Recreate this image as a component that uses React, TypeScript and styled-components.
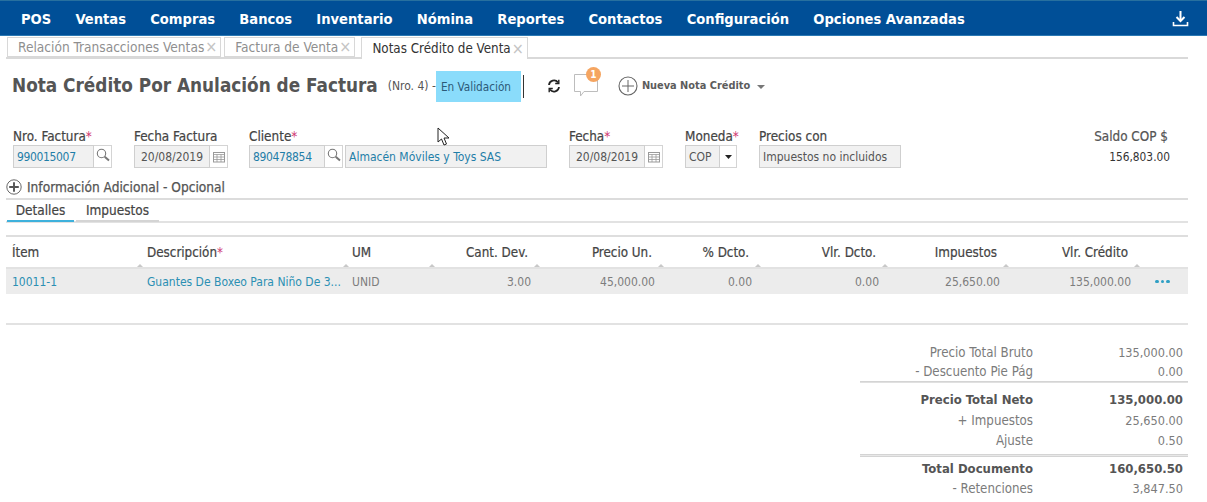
import React from "react";
import styled, { createGlobalStyle } from "styled-components";

const Global = createGlobalStyle`
  html, body { margin: 0; padding: 0; background: #fff; }
  body { width: 1207px; height: 502px; overflow: hidden; font-family: "DejaVu Sans Condensed", "DejaVu Sans", sans-serif; font-stretch: condensed; color: #555; }
  * { box-sizing: border-box; }
`;

const Page = styled.div`
  position: relative;
  width: 1207px;
  height: 502px;
  overflow: hidden;
  display: flex;
  flex-direction: column;
`;

const Nav = styled.nav`
  height: 36px;
  flex: none;
  background: #004f97;
  border-top: 1px solid #27709f;
  border-bottom: 1px solid #2b79b4;
  display: flex;
  align-items: center;
  padding: 0 17px 0 21px;
  gap: 24.2px;
`;
const NavItem = styled.span`
  color: #fff;
  font-weight: 700;
  font-size: 14.6px;
  white-space: nowrap;
`;
const NavIcon = styled.span`
  margin-left: auto;
  display: flex;
`;

const TabStrip = styled.div`
  height: 23px;
  flex: none;
  margin: 0 19px 0 6px;
  padding: 1px 0 0 1px;
  display: flex;
  gap: 3px;
  border-bottom: 2px solid #d9d9d9;
`;
const Tab = styled.div<{ $active?: boolean }>`
  height: ${(p) => (p.$active ? "22px" : "20px")};
  display: flex;
  align-items: center;
  gap: 1px;
  margin-left: ${(p) => (p.$active ? "3px" : "0")};
  padding: 0 3px 0 10px;
  font-size: ${(p) => (p.$active ? "13.3px" : "13.6px")};
  white-space: nowrap;
  color: ${(p) => (p.$active ? "#333" : "#8f8f8f")};
  background: #fff;
  border: 1px solid #d8d8d8;
  border-bottom: ${(p) => (p.$active ? "none" : "1px solid #d8d8d8")};
`;
const TabClose = styled.span`
  color: #c4c4c4;
  font-size: 16px;
  line-height: 1;
`;

const TitleRow = styled.div`
  height: 31px;
  flex: none;
  margin-top: 11px;
  padding-left: 12px;
  display: flex;
  align-items: center;
`;
const Title = styled.h1`
  margin: 0 10px 0 0;
  font-size: 18.8px;
  font-weight: 700;
  color: #555;
  white-space: nowrap;
`;
const TitleNote = styled.span`
  font-size: 12px;
  color: #555;
  white-space: nowrap;
`;
const Status = styled.span`
  width: 85px;
  height: 31px;
  margin: 2px 0 0 0;
  padding-left: 5px;
  display: flex;
  align-items: center;
  background: #8adcfb;
  color: #2c5a78;
  font-size: 11.7px;
  white-space: nowrap;
`;
const Caret = styled.span`
  width: 1px;
  height: 23px;
  margin: 2px 0 0 2px;
  background: #333;
`;
const ActionIcon = styled.span<{ $ml: number }>`
  position: relative;
  display: flex;
  margin-left: ${(p) => p.$ml}px;
`;
const Badge = styled.span`
  position: absolute;
  left: 12px;
  top: -7px;
  width: 15px;
  height: 15px;
  border-radius: 50%;
  background: #f5a561;
  color: #fff;
  font-size: 10px;
  font-weight: 700;
  display: flex;
  align-items: center;
  justify-content: center;
`;
const NewNote = styled.span`
  margin-left: 4px;
  font-size: 10.9px;
  font-weight: 700;
  color: #5c5c5c;
  white-space: nowrap;
`;
const DropArrow = styled.span`
  margin-left: 7px;
  margin-top: 2px;
  border-left: 4px solid transparent;
  border-right: 4px solid transparent;
  border-top: 4px solid #777;
`;

const FieldsRow = styled.div`
  flex: none;
  margin-top: 28px;
  padding: 0 37px 0 13px;
  display: flex;
`;
const Field = styled.div<{ $w: number; $ml?: number }>`
  width: ${(p) => p.$w}px;
  margin-left: ${(p) => p.$ml ?? 0}px;
  flex: none;
`;
const Label = styled.div`
  height: 16px;
  font-size: 13.4px;
  color: #444;
  -webkit-text-stroke: 0.2px #444;
  white-space: nowrap;
`;
const Req = styled.span`
  color: #d0386f;
  -webkit-text-stroke: 0;
`;
const InputGroup = styled.div`
  display: flex;
  height: 23px;
`;
const Input = styled.div<{ $link?: boolean; $center?: boolean; $tight?: boolean }>`
  flex: 1;
  min-width: 0;
  height: 23px;
  padding: 0 3px 0 3px;
  display: flex;
  align-items: center;
  justify-content: ${(p) => (p.$center ? "center" : "flex-start")};
  font-size: 12px;
  letter-spacing: ${(p) => (p.$tight ? "-0.35px" : "0")};
  white-space: nowrap;
  background: #f1f1f1;
  border: 1px solid #cfcfcf;
  color: ${(p) => (p.$link ? "#1f7ea8" : "#555")};
`;
const Addon = styled.div<{ $w: number }>`
  width: ${(p) => p.$w}px;
  flex: none;
  height: 23px;
  display: flex;
  align-items: center;
  justify-content: center;
  background: #fff;
  border: 1px solid #d4d4d4;
  border-left: none;
`;
const SearchAddon = styled(Addon)`
  align-items: flex-start;
  padding-top: 2px;
`;
const Balance = styled.div`
  margin-left: auto;
  text-align: right;
  color: #333;
`;
const BalanceLabel = styled.div`
  height: 16px;
  font-size: 13.4px;
  color: #555;
  margin-right: 2px;
  -webkit-text-stroke: 0.2px #555;
`;
const BalanceValue = styled.div`
  height: 23px;
  display: flex;
  align-items: center;
  justify-content: flex-end;
  font-size: 11.8px;
`;

const InfoRow = styled.div`
  flex: none;
  height: 20px;
  margin: 9px 19px 0 6px;
  display: flex;
  align-items: center;
  gap: 5px;
  font-size: 13.6px;
  -webkit-text-stroke: 0.25px #555;
  color: #555;
`;
const InnerTabs = styled.div`
  flex: none;
  height: 25px;
  margin: 1px 19px 0 6px;
  padding-left: 1px;
  display: flex;
  gap: 2px;
  border-top: 2px solid #dcdcdc;
  border-bottom: 2px solid #e2e2e2;
`;
const InnerTab = styled.div<{ $active?: boolean; $w: number }>`
  width: ${(p) => p.$w}px;
  height: 22px;
  padding-top: 2px;
  text-align: center;
  font-size: 13.5px;
  color: #444;
  -webkit-text-stroke: 0.2px #444;
  border-bottom: 2px solid ${(p) => (p.$active ? "#3eb1dc" : "#d4d4d4")};
`;

const Table = styled.div`
  flex: none;
  margin: 12px 19px 0 6px;
  border-top: 2px solid #dedede;
`;
const Cols = styled.div`
  display: grid;
  grid-template-columns: 137px 206px 86px 105px 124px 97px 127px 121px 131px 1fr;
  align-items: center;
`;
const HeadRow = styled(Cols)`
  height: 32px;
  border-bottom: 2px solid #e2e2e2;
`;
const Head = styled.div<{ $right?: boolean; $pad?: number }>`
  position: relative;
  height: 100%;
  display: flex;
  align-items: center;
  justify-content: ${(p) => (p.$right ? "flex-end" : "flex-start")};
  padding: ${(p) => (p.$right ? "0 12px 0 0" : `0 0 0 ${p.$pad ?? 0}px`)};
  font-size: 13.3px;
  color: #444;
  -webkit-text-stroke: 0.2px #444;
  white-space: nowrap;
`;
const SortMark = styled.span`
  position: absolute;
  right: 0;
  bottom: 0;
  border-left: 3px solid transparent;
  border-right: 3px solid transparent;
  border-bottom: 3px solid #c8c8c8;
`;
const DataRow = styled(Cols)`
  height: 25px;
  background: #ececec;
`;
const Cell = styled.div<{ $right?: boolean; $link?: boolean; $pad?: number }>`
  font-size: 12px;
  white-space: nowrap;
  text-align: ${(p) => (p.$right ? "right" : "left")};
  padding: ${(p) => (p.$right ? "0 9px 0 0" : `0 0 0 ${p.$pad ?? 0}px`)};
  color: ${(p) => (p.$link ? "#2b8fb3" : "#7d7d7d")};
`;
const Dots = styled.div`
  display: flex;
  gap: 2px;
  padding-left: 15px;
`;
const Dot = styled.span`
  width: 3.5px;
  height: 3.5px;
  border-radius: 50%;
  background: #2f9fc4;
`;
const TableEnd = styled.div`
  flex: none;
  margin: 29px 19px 0 6px;
  border-top: 2px solid #e2e2e2;
`;

const Totals = styled.div`
  flex: none;
  width: 328px;
  margin: 18px 0 0 860px;
  display: flex;
  flex-direction: column;
`;
const TotalRow = styled.div<{ $h: number; $strong?: boolean }>`
  height: ${(p) => p.$h}px;
  display: grid;
  grid-template-columns: 173px 1fr;
  align-items: center;
  text-align: right;
  padding-right: 5px;
  font-size: ${(p) => (p.$strong ? "13px" : "13.2px")};
  font-weight: ${(p) => (p.$strong ? 700 : 400)};
  color: ${(p) => (p.$strong ? "#555" : "#7b7b7b")};
  white-space: nowrap;
`;
const TotalValue = styled.span<{ $strong?: boolean }>`
  font-size: ${(p) => (p.$strong ? "13px" : "12.6px")};
`;
const Rule = styled.div<{ $double?: boolean; $mt: number; $mb: number }>`
  height: ${(p) => (p.$double ? "3px" : "2px")};
  margin: ${(p) => p.$mt}px 0 ${(p) => p.$mb}px;
  border-top: 1px solid #d4d4d4;
  border-bottom: ${(p) => (p.$double ? "1px solid #d4d4d4" : "none")};
  background: ${(p) => (p.$double ? "#e8e8e8" : "#e0e0e0")};
`;

const Cursor = styled.svg`
  position: absolute;
  left: 437px;
  top: 127px;
`;

const Search = () => (
  <svg width="14" height="14" viewBox="0 0 14 14" fill="none" stroke="#777" strokeWidth="1.1">
    <circle cx="5.5" cy="5.5" r="4.2" />
    <path d="M8.7 8.7 L13 12.5" strokeWidth="2" />
  </svg>
);
const Calendar = () => (
  <svg width="12" height="12" viewBox="0 0 12 12" fill="none" stroke="#9a9a9a" strokeWidth="1">
    <rect x="0.5" y="1.5" width="11" height="9.5" />
    <path d="M0.5 3.5 H11.5 M0.5 6 H11.5 M0.5 8.5 H11.5 M4 3.5 V11 M8 3.5 V11" strokeWidth="0.8" />
  </svg>
);
const PlusCircle = ({ size, color, sw }: { size: number; color: string; sw: number }) => (
  <svg width={size} height={size} viewBox="0 0 20 20" fill="none" stroke={color} strokeWidth={sw}>
    <circle cx="10" cy="10" r="9" strokeWidth={1.1} />
    <path d="M10 4 V16 M4 10 H16" />
  </svg>
);

const navItems = ["POS", "Ventas", "Compras", "Bancos", "Inventario", "Nómina", "Reportes", "Contactos", "Configuración", "Opciones Avanzadas"];

export default function App() {
  return (
    <Page>
      <Global />
      <Nav>
        {navItems.map((n) => (
          <NavItem key={n}>{n}</NavItem>
        ))}
        <NavIcon>
          <svg width="19" height="19" viewBox="0 0 19 19" fill="none" stroke="#fff" strokeWidth="2">
            <path d="M9.5 2 V11" />
            <path d="M5.5 8 L9.5 12 L13.5 8" />
            <path d="M2.5 13 V16.5 H16.5 V13" strokeWidth="1.6" />
          </svg>
        </NavIcon>
      </Nav>
      <TabStrip>
        <Tab>Relación Transacciones Ventas <TabClose>×</TabClose></Tab>
        <Tab>Factura de Venta <TabClose>×</TabClose></Tab>
        <Tab $active>Notas Crédito de Venta <TabClose>×</TabClose></Tab>
      </TabStrip>
      <TitleRow>
        <Title>Nota Crédito Por Anulación de Factura</Title>
        <TitleNote>(Nro. 4) -</TitleNote>
        <Status>En Validación</Status>
        <Caret />
        <ActionIcon $ml={23}>
          <svg width="14" height="14" viewBox="0 0 14 14" fill="none" stroke="#222" strokeWidth="1.8">
            <path d="M2 6 A5 5 0 0 1 11 3.5" />
            <path d="M12 8 A5 5 0 0 1 3 10.5" />
            <path d="M11.8 0.8 V4.5 H8.2" strokeWidth="1.4" />
            <path d="M2.2 13.2 V9.5 H5.8" strokeWidth="1.4" />
          </svg>
        </ActionIcon>
        <ActionIcon $ml={13}>
          <svg width="24" height="23" viewBox="0 0 24 23" fill="#fff" stroke="#bdbdbd" strokeWidth="1">
            <path d="M0.5 0.5 H23.5 V17.5 H10 L6.5 22 V17.5 H0.5 Z" />
          </svg>
          <Badge>1</Badge>
        </ActionIcon>
        <ActionIcon $ml={20}>
          <PlusCircle size={20} color="#666" sw={1} />
        </ActionIcon>
        <NewNote>Nueva Nota Crédito</NewNote>
        <DropArrow />
      </TitleRow>
      <FieldsRow>
        <Field $w={99}>
          <Label>Nro. Factura<Req>*</Req></Label>
          <InputGroup><Input $link $tight>990015007</Input><SearchAddon $w={18}><Search /></SearchAddon></InputGroup>
        </Field>
        <Field $w={94} $ml={22}>
          <Label>Fecha Factura</Label>
          <InputGroup><Input $center>20/08/2019</Input><Addon $w={18}><Calendar /></Addon></InputGroup>
        </Field>
        <Field $w={94} $ml={21}>
          <Label>Cliente<Req>*</Req></Label>
          <InputGroup><Input $link $tight>890478854</Input><SearchAddon $w={18}><Search /></SearchAddon></InputGroup>
        </Field>
        <Field $w={202} $ml={2}>
          <Label>&nbsp;</Label>
          <InputGroup><Input $link>Almacén Móviles y Toys SAS</Input></InputGroup>
        </Field>
        <Field $w={94} $ml={22}>
          <Label>Fecha<Req>*</Req></Label>
          <InputGroup><Input $center>20/08/2019</Input><Addon $w={18}><Calendar /></Addon></InputGroup>
        </Field>
        <Field $w={52} $ml={22}>
          <Label>Moneda<Req>*</Req></Label>
          <InputGroup>
            <Input>COP</Input>
            <Addon $w={17}>
              <svg width="7" height="4" viewBox="0 0 7 4"><path d="M0 0 H7 L3.5 4 Z" fill="#222" /></svg>
            </Addon>
          </InputGroup>
        </Field>
        <Field $w={142} $ml={22}>
          <Label>Precios con</Label>
          <InputGroup><Input>Impuestos no incluidos</Input></InputGroup>
        </Field>
        <Balance>
          <BalanceLabel>Saldo COP $</BalanceLabel>
          <BalanceValue>156,803.00</BalanceValue>
        </Balance>
      </FieldsRow>
      <InfoRow>
        <PlusCircle size={16} color="#555" sw={2.4} />
        Información Adicional - Opcional
      </InfoRow>
      <InnerTabs>
        <InnerTab $active $w={67}>Detalles</InnerTab>
        <InnerTab $w={83}>Impuestos</InnerTab>
      </InnerTabs>
      <Table>
        <HeadRow>
          <Head $pad={6}>Ítem<SortMark /></Head>
          <Head $pad={4}>Descripción<Req>*</Req><SortMark /></Head>
          <Head $pad={3}>UM<SortMark /></Head>
          <Head $right>Cant. Dev.<SortMark /></Head>
          <Head $right>Precio Un.<SortMark /></Head>
          <Head $right>% Dcto.<SortMark /></Head>
          <Head $right>Vlr. Dcto.<SortMark /></Head>
          <Head $right>Impuestos<SortMark /></Head>
          <Head $right>Vlr. Crédito<SortMark /></Head>
          <Head />
        </HeadRow>
        <DataRow>
          <Cell $link $pad={6}>10011-1</Cell>
          <Cell $link $pad={4}>Guantes De Boxeo Para Niño De 3...</Cell>
          <Cell $pad={3}>UNID</Cell>
          <Cell $right>3.00</Cell>
          <Cell $right>45,000.00</Cell>
          <Cell $right>0.00</Cell>
          <Cell $right>0.00</Cell>
          <Cell $right>25,650.00</Cell>
          <Cell $right>135,000.00</Cell>
          <Dots><Dot /><Dot /><Dot /></Dots>
        </DataRow>
      </Table>
      <TableEnd />
      <Totals>
        <TotalRow $h={19}><span>Precio Total Bruto</span><TotalValue>135,000.00</TotalValue></TotalRow>
        <TotalRow $h={19}><span>- Descuento Pie Pág</span><TotalValue>0.00</TotalValue></TotalRow>
        <Rule $mt={0} $mb={6} />
        <TotalRow $h={21} $strong><span>Precio Total Neto</span><TotalValue $strong>135,000.00</TotalValue></TotalRow>
        <TotalRow $h={20}><span>+ Impuestos</span><TotalValue>25,650.00</TotalValue></TotalRow>
        <TotalRow $h={20}><span>Ajuste</span><TotalValue>0.50</TotalValue></TotalRow>
        <Rule $double $mt={4} $mb={1} />
        <TotalRow $h={20} $strong><span>Total Documento</span><TotalValue $strong>160,650.50</TotalValue></TotalRow>
        <TotalRow $h={20}><span>- Retenciones</span><TotalValue>3,847.50</TotalValue></TotalRow>
      </Totals>
      <Cursor width="14" height="20" viewBox="0 0 14 20" fill="#fff" stroke="#222" strokeWidth="1">
        <path d="M1 1 L1 15 L4.5 12 L7 18 L9.5 17 L7 11 L12 11 Z" />
      </Cursor>
    </Page>
  );
}
